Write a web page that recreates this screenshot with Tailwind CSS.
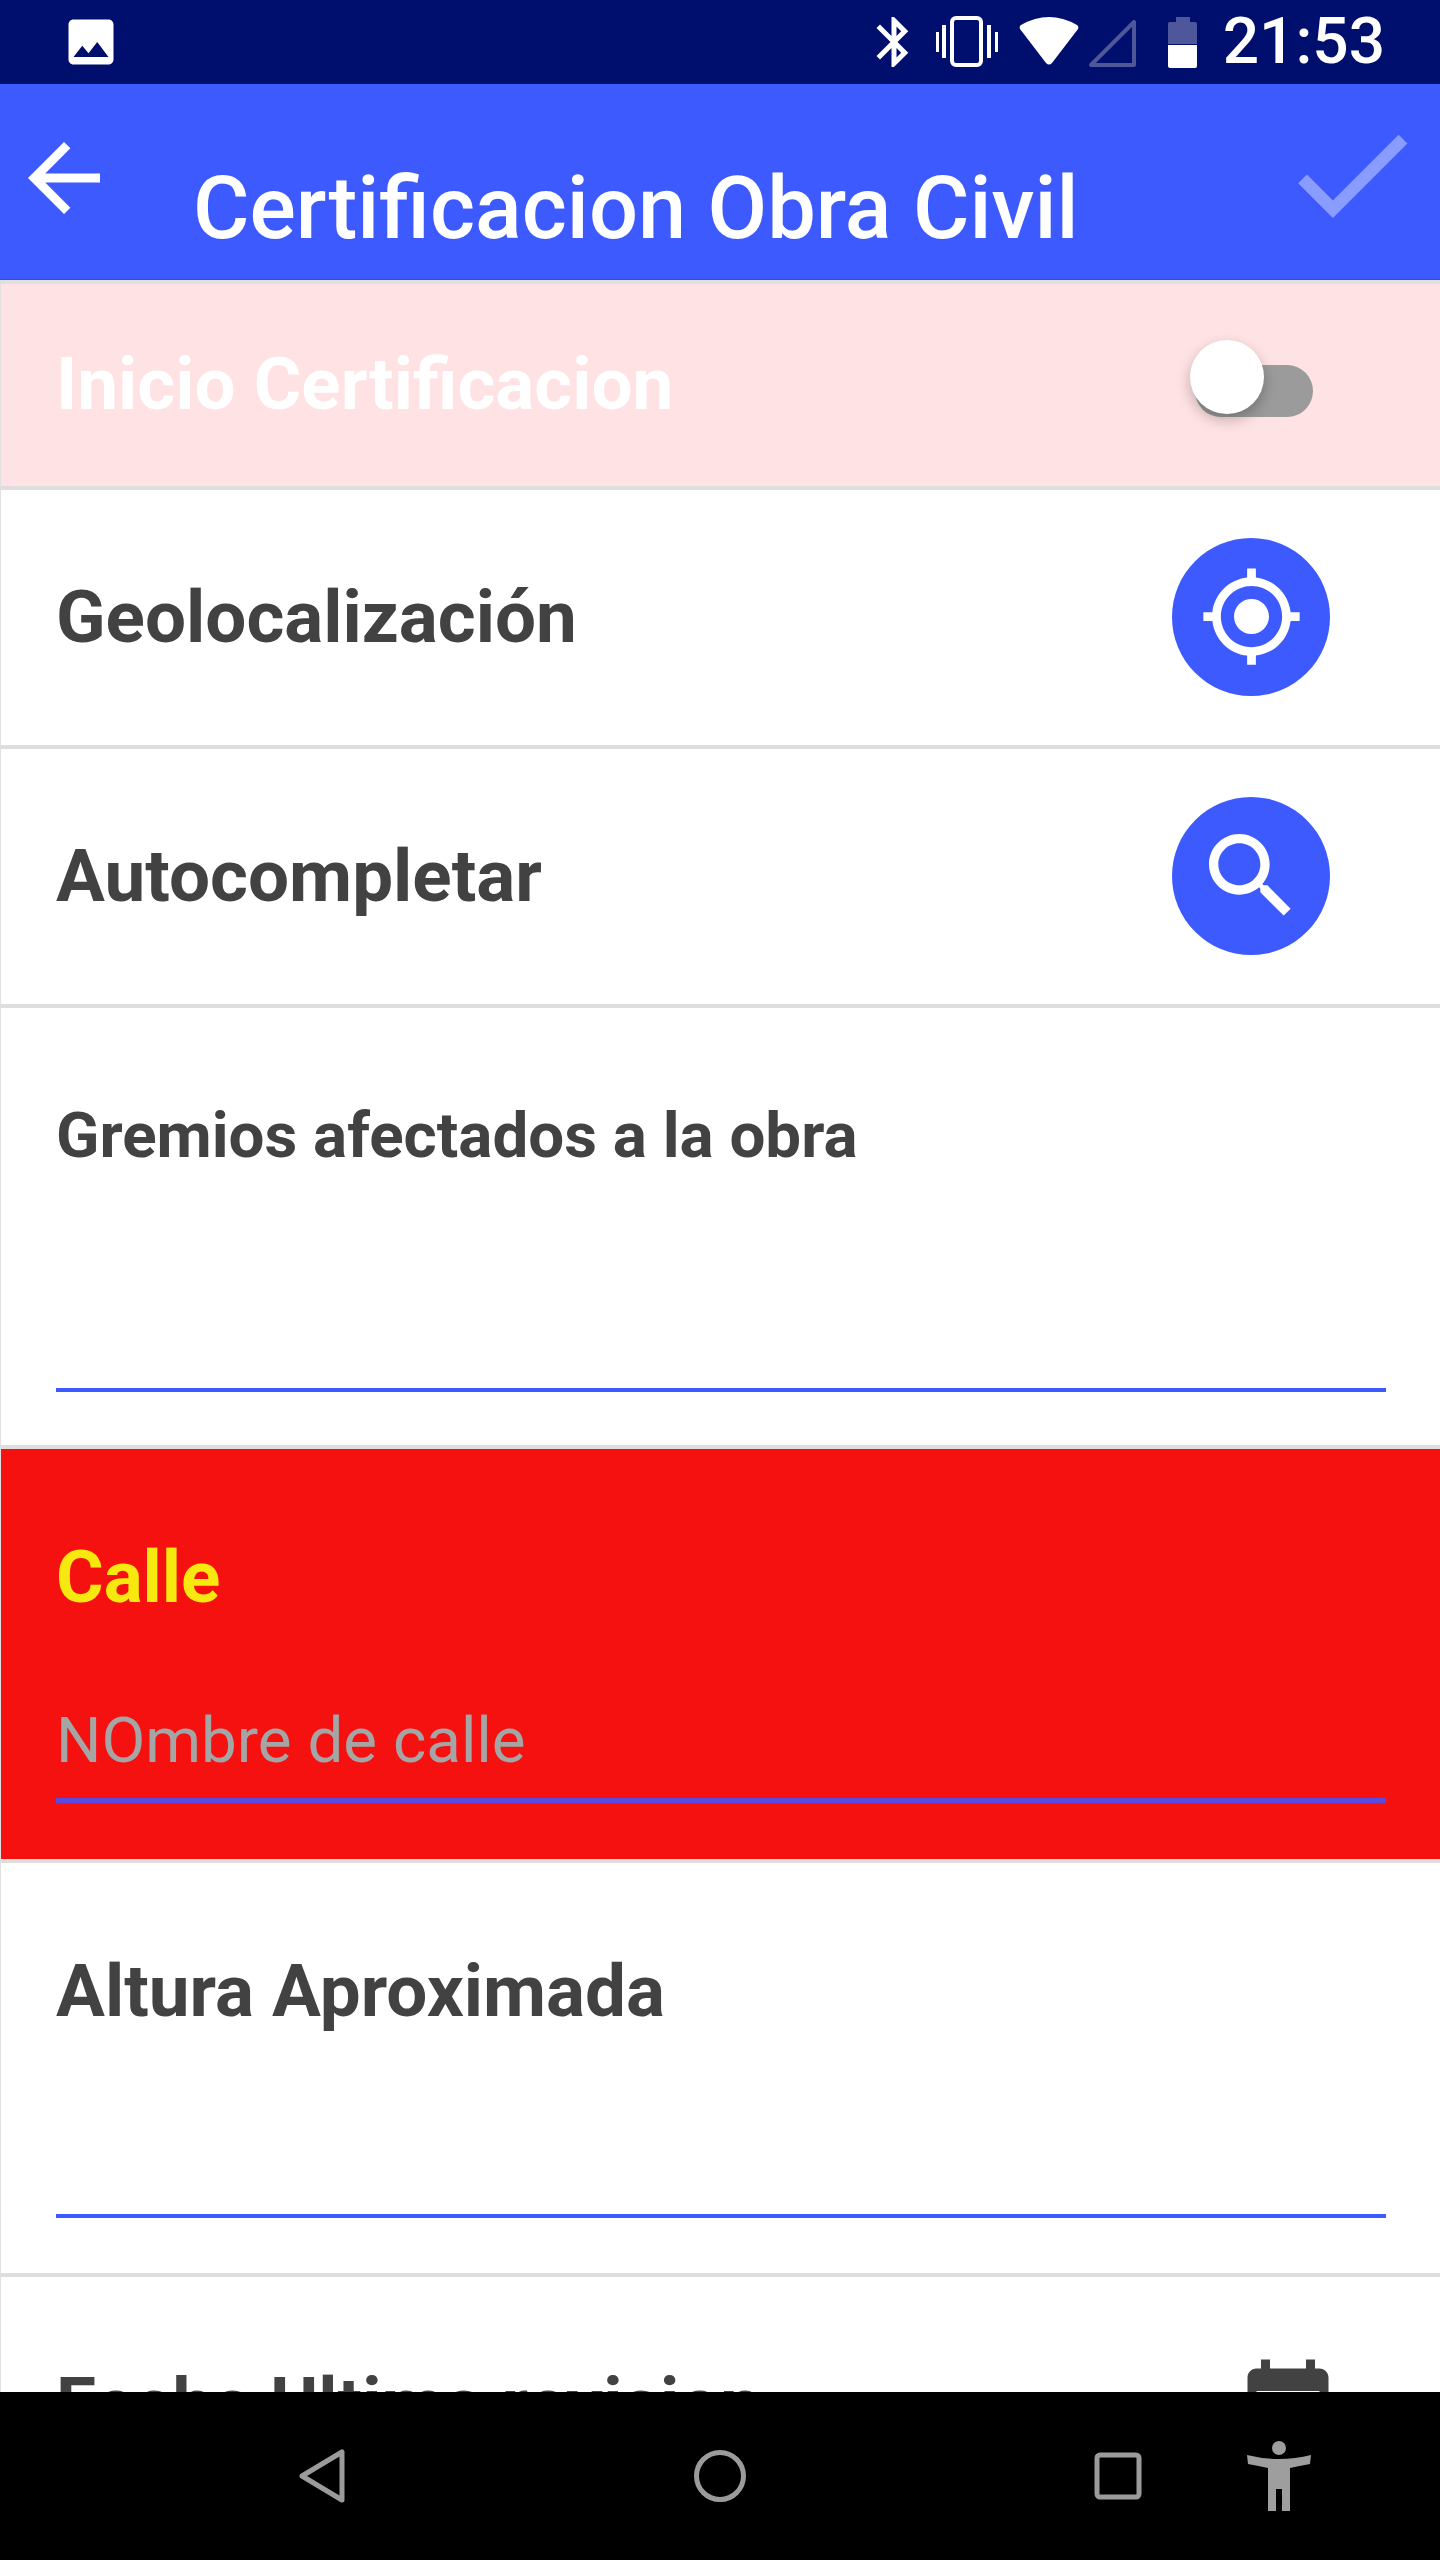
<!DOCTYPE html>
<html>
<head>
<meta charset="utf-8">
<title>Certificacion Obra Civil</title>
<script src="https://cdn.jsdelivr.net/npm/@tailwindcss/browser@4"></script>
</head>
<body class="bg-white font-['Roboto',sans-serif]">
<div class="flex flex-col w-[1440px] h-[2560px] overflow-hidden">

  <!-- status bar -->
  <div class="flex items-center h-[84px] shrink-0 bg-[#000f6e] text-white">
    <svg class="ml-[61px] mb-[1px] w-[60px] h-[60px] shrink-0" viewBox="0 0 24 24" fill="#fff"><path d="M21 19V5c0-1.1-.9-2-2-2H5c-1.100 0-2 .9-2 2v14c0 1.100.9 2 2 2h14c1.100 0 2-.9 2-2zM8.500 13.500l2.500 3.010L14.500 12l4.500 6H5l3.500-4.500z"/></svg>
    <svg class="ml-auto w-[60px] h-[60px] shrink-0" viewBox="0 0 24 24" fill="#fff"><path d="M17.710 7.710L12 2h-1v7.590L6.410 5 5 6.410 10.590 12 5 17.590 6.410 19 11 14.410V22h1l5.710-5.710-4.300-4.290 4.300-4.290zM13 5.830l1.880 1.880L13 9.590V5.830zm1.880 10.460L13 18.170v-3.760l1.880 1.880z"/></svg>
    <svg class="ml-[12px] w-[62px] h-[52px] shrink-0" viewBox="0 0 62 52" fill="#fff"><rect x="16" y="2" width="29" height="47" rx="4" fill="none" stroke="#fff" stroke-width="4"/><rect x="0" y="16" width="3" height="20"/><rect x="6" y="9" width="4" height="33"/><rect x="51" y="9" width="4" height="33"/><rect x="59" y="16" width="3" height="20"/></svg>
    <svg class="ml-[21px] mb-[2px] w-[60px] h-[48px] shrink-0" viewBox="0 0 60 48" fill="#fff"><path d="M2 8Q30-8 58 8Q60 9.500 59 12L33 46Q30 49 27 46L1 12Q0 9.500 2 8Z"/></svg>
    <svg class="ml-[10px] mt-[3px] w-[47px] h-[47px] shrink-0" viewBox="0 0 47 47" fill="none"><path d="M45 2V45H2Z" stroke="#fff" stroke-opacity=".3" stroke-width="4" stroke-linejoin="round"/></svg>
    <svg class="ml-[32px] w-[29px] h-[51px] shrink-0" viewBox="0 0 29 51" fill="#fff"><path d="M8 0H22V5H27Q29 5 29 7V27H0V7Q0 5 2 5H8Z" fill-opacity=".3"/><path d="M0 28H29V49Q29 51 27 51H2Q0 51 0 49Z"/></svg>
    <span class="ml-[26px] mr-[55px] text-[64px] leading-[84px] font-medium">21:53</span>
  </div>

  <!-- toolbar -->
  <div class="flex items-start h-[196px] shrink-0 bg-[#3d5afe] border-b border-[#2f4be8] text-white">
    <svg class="ml-[10px] mt-[40px] w-[108px] h-[108px] shrink-0" viewBox="0 0 24 24" fill="#fff"><path d="M20 11H7.830l5.590-5.590L12 4l-8 8 8 8 1.410-1.410L7.830 13H20v-2z"/></svg>
    <div class="ml-[75px] mt-[78px] flex-1 text-[86.500px] leading-[94px] font-medium">Certificacion Obra Civil</div>
    <svg class="mr-[14px] mt-[16px] w-[149px] h-[149px] shrink-0" viewBox="0 0 24 24" fill="#fff" fill-opacity=".4"><path d="M9 16.170L4.830 12l-1.420 1.410L9 19 21 7l-1.410-1.410z"/></svg>
  </div>

  <!-- form -->
  <div class="flex flex-col flex-1 min-h-0 border-l border-[#e0e0e0] overflow-hidden">
    <div class="h-[4px] shrink-0 bg-[#e0e0e0]"></div>

    <div class="flex items-center h-[206px] shrink-0 bg-[#ffe2e3] border-b-[4px] border-[#dedede] pl-[55px] relative">
      <span class="text-[72.800px] font-bold text-white">Inicio Certificacion</span>
      <div class="absolute left-[1194px] top-[81px] w-[118px] h-[52px] rounded-full bg-[#9b9b9b]"></div>
      <div class="absolute left-[1189px] top-[56px] w-[74px] h-[74px] rounded-full bg-white shadow-[0_6px_14px_rgba(0,0,0,0.25)]"></div>
    </div>

    <div class="flex items-center justify-between h-[259px] shrink-0 border-b-[4px] border-[#dedede] pl-[55px] pr-[110px]">
      <span class="text-[72.800px] font-bold text-[#424242]">Geolocalización</span>
      <div class="flex items-center justify-center mb-[2px] w-[158px] h-[158px] rounded-full bg-[#3d5afe]">
        <svg class="w-[105px] h-[105px]" viewBox="0 0 24 24" fill="#fff"><path d="M12 8c-2.210 0-4 1.790-4 4s1.790 4 4 4 4-1.790 4-4-1.790-4-4-4zm8.940 3c-.46-4.170-3.770-7.480-7.940-7.940V1h-2v2.060C6.830 3.520 3.520 6.830 3.060 11H1v2h2.060c.46 4.170 3.770 7.480 7.940 7.940V23h2v-2.060c4.170-.46 7.480-3.770 7.940-7.940H23v-2h-2.060zM12 19c-3.870 0-7-3.130-7-7s3.130-7 7-7 7 3.130 7 7-3.130 7-7 7z"/></svg>
      </div>
    </div>

    <div class="flex items-center justify-between h-[259px] shrink-0 border-b-[4px] border-[#dedede] pl-[55px] pr-[110px]">
      <span class="text-[72.800px] font-bold text-[#424242]">Autocompletar</span>
      <div class="flex items-center justify-center mb-[2px] w-[158px] h-[158px] rounded-full bg-[#3d5afe]">
        <svg class="w-[112px] h-[112px]" viewBox="0 0 24 24" fill="#fff"><path d="M15.500 14h-.79l-.28-.27C15.410 12.590 16 11.110 16 9.500 16 5.910 13.090 3 9.500 3S3 5.910 3 9.500 5.910 16 9.500 16c1.610 0 3.090-.59 4.230-1.570l.27.28v.79l5 4.990L20.490 19l-4.990-5zm-6 0C7.010 14 5 11.990 5 9.500S7.010 5 9.500 5 14 7.010 14 9.500 11.990 14 9.500 14z"/></svg>
      </div>
    </div>

    <div class="flex flex-col h-[441px] shrink-0 border-b-[4px] border-[#dedede] pl-[55px] pr-[54px]">
      <span class="mt-[90px] text-[63.700px] leading-[76px] font-bold text-[#424242]">Gremios afectados a la obra</span>
      <div class="mt-[214px] h-[4px] bg-[#3d5afe]"></div>
    </div>

    <div class="flex flex-col h-[410px] shrink-0 bg-[#f61111] pl-[55px] pr-[54px] border-b-[4px] border-[#dedede] box-content">
      <span class="mt-[86px] text-[72.800px] leading-[84px] font-bold text-[#f7e80f]">Calle</span>
      <span class="mt-[84px] text-[63.700px] leading-[76px] text-[#a5a5a5]">NOmbre de calle</span>
      <div class="mt-[19px] h-[5px] bg-[#5b4ae0]"></div>
    </div>

    <div class="flex flex-col h-[410px] shrink-0 border-b-[4px] border-[#dedede] pl-[55px] pr-[54px] box-content">
      <span class="mt-[86px] text-[72.800px] leading-[84px] font-bold text-[#424242]">Altura Aproximada</span>
      <div class="mt-[181px] h-[4px] bg-[#3d5afe]"></div>
    </div>

    <div class="flex items-start justify-between pl-[55px] pr-[98px] shrink-0">
      <span class="mt-[85px] text-[72.800px] leading-[84px] font-bold text-[#424242]">Fecha Ultima revision</span>
      <svg class="mt-[78px] w-[108px] h-[108px] shrink-0" viewBox="0 0 24 24" fill="#424242"><path d="M19 3h-1V1h-2v2H8V1H6v2H5c-1.110 0-2 .9-2 2v14c0 1.100.89 2 2 2h14c1.100 0 2-.9 2-2V5c0-1.100-.9-2-2-2zm0 16H5V8h14v11z"/></svg>
    </div>
  </div>

  <!-- nav bar -->
  <div class="flex items-center h-[168px] shrink-0 bg-black">
    <svg class="ml-[298px] w-[48px] h-[56px] shrink-0" viewBox="0 0 48 56" fill="none" stroke="#9b9b9b" stroke-width="5" stroke-linejoin="round"><path d="M44 4V52L4 28Z"/></svg>
    <svg class="ml-[347px] w-[54px] h-[54px] shrink-0" viewBox="0 0 54 54" fill="none" stroke="#9b9b9b" stroke-width="5"><circle cx="27" cy="27" r="23.500"/></svg>
    <svg class="ml-[347px] w-[48px] h-[48px] shrink-0" viewBox="0 0 48 48" fill="none" stroke="#9b9b9b" stroke-width="5"><rect x="3" y="3" width="42" height="42" rx="3"/></svg>
    <svg class="ml-[105px] w-[64px] h-[70px] shrink-0" viewBox="0 0 64 70" fill="#9e9e9e"><circle cx="32" cy="7" r="7"/><path d="M0 14Q32 22 64 14L63 23Q52 25 43 27V70H35V48H29V70H21V27Q12 25 1 23Z"/></svg>
  </div>
</div>
</body>
</html>
